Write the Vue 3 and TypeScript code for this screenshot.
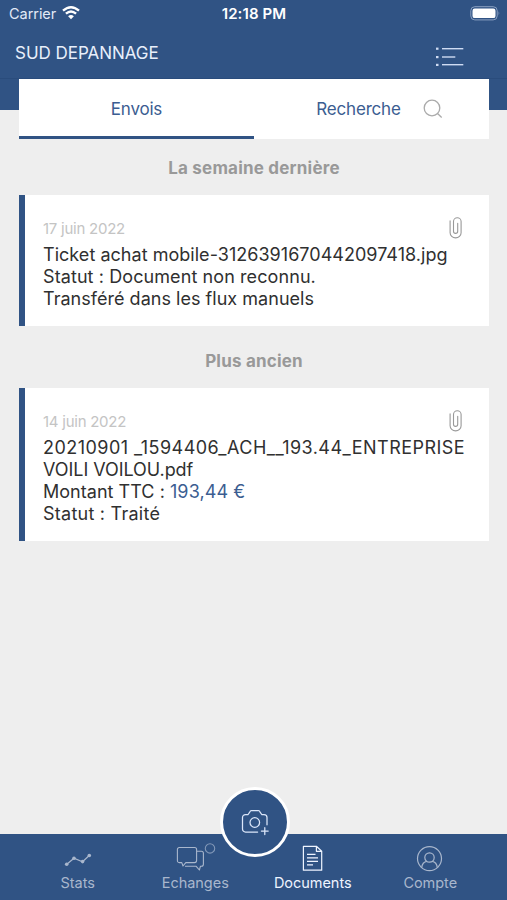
<script setup lang="ts">
interface Line {
  text: string
  amount?: string
  fit: string
}
interface Doc {
  group: string
  date: string
  lines: Line[]
}

const docs: Doc[] = [
  {
    group: 'La semaine dernière',
    date: '17 juin 2022',
    lines: [
      { text: 'Ticket achat mobile-3126391670442097418.jpg', fit: 'normal' },
      { text: 'Statut : Document non reconnu.', fit: 'loose' },
      { text: 'Transféré dans les flux manuels', fit: 'normal' },
    ],
  },
  {
    group: 'Plus ancien',
    date: '14 juin 2022',
    lines: [
      { text: '20210901 _1594406_ACH__193.44_ENTREPRISE', fit: 'wide' },
      { text: 'VOILI VOILOU.pdf', fit: 'tight' },
      { text: 'Montant TTC : ', amount: '193,44 €', fit: 'normal' },
      { text: 'Statut : Traité', fit: 'looser' },
    ],
  },
]

const tabs = ['Stats', 'Echanges', 'Documents', 'Compte']
</script>

<template>
  <div class="screen">
    <header class="header">
      <div class="status">
        <div class="carrier">
          <span>Carrier</span>
          <svg width="18" height="14" viewBox="0 0 18 14" fill="none" stroke="#fff">
            <path d="M1 4.7Q9-2.3 17 4.7M3.9 7.7Q9 3.2 14.1 7.7" stroke-width="2.3" />
            <path d="M6.1 10.2Q9 7.7 11.9 10.2L9 13.2Z" fill="#fff" stroke="none" />
          </svg>
        </div>
        <span class="clock">12:18 PM</span>
        <svg class="battery" width="31" height="15" viewBox="0 0 31 15">
          <rect x=".8" y=".7" width="26.4" height="13.2" rx="4" fill="none" stroke="#8aa0c1" stroke-width="1" />
          <rect x="2.5" y="2.5" width="23" height="9.6" rx="2.2" fill="#fff" />
          <path d="M28.6 5.2q1.8 2.1 0 4.3z" fill="#8aa0c1" />
        </svg>
      </div>
      <div class="title-row">
        <h1>SUD DEPANNAGE</h1>
        <svg width="29" height="20" viewBox="0 0 29 20" fill="#cfdcf3">
          <rect x="1" y=".6" width="2.5" height="2.2" /><rect x="1" y="9" width="2.5" height="2.2" /><rect x="1" y="16.8" width="2.5" height="2.2" />
          <rect x="7" y="1" width="21.3" height="1.4" /><rect x="7" y="9.3" width="13.3" height="1.4" /><rect x="7" y="17" width="21.3" height="1.4" />
        </svg>
      </div>
    </header>

    <nav class="switcher">
      <div class="switch active">Envois</div>
      <div class="switch search">
        <span>Recherche</span>
        <svg width="20" height="20" viewBox="0 0 20 20" fill="none" stroke="#aaa" stroke-width="1.3">
          <circle cx="9" cy="9" r="7.8" /><path d="M14.5 14.5l4.2 4" />
        </svg>
      </div>
    </nav>

    <main class="list">
      <section v-for="doc in docs" :key="doc.group">
        <h2>{{ doc.group }}</h2>
        <article class="card">
          <div class="meta">
            <time>{{ doc.date }}</time>
            <svg width="14" height="22" viewBox="0 0 14 22" fill="none" stroke="#999" stroke-width="1.1" stroke-linecap="round">
              <path d="M1.1 3.9V15.7a5.5 5.2 0 0 0 11 0V4.4a3.8 3.7 0 0 0-7.6 0V14.3a2.1 2.1 0 0 0 4.2 0V6.2" />
            </svg>
          </div>
          <p v-for="line in doc.lines" :key="line.text" :class="line.fit">{{ line.text }}<span v-if="line.amount" class="amount">{{ line.amount }}</span></p>
        </article>
      </section>
    </main>

    <footer class="tabbar">
      <div v-for="tab in tabs" :key="tab" class="tab" :class="{ current: tab === 'Documents' }">
        <div class="icon">
          <svg v-if="tab === 'Stats'" width="28" height="28" viewBox="0 0 28 28" fill="none" stroke="currentColor" stroke-width="1.2">
            <path d="M2.5 19.5L10 13.3L18.5 16.8L25.5 10.3" />
            <g fill="currentColor" stroke="none"><circle cx="2.7" cy="19.3" r="1.8" /><circle cx="10" cy="13.3" r="1.8" /><circle cx="18.6" cy="16.6" r="1.8" /><circle cx="25.3" cy="10.5" r="1.8" /></g>
          </svg>
          <svg v-else-if="tab === 'Echanges'" class="chat" width="40" height="28" viewBox="0 0 40 28" fill="none" stroke="currentColor" stroke-width="1.1" stroke-linejoin="round">
            <path d="M3.2 2.5H18.6a2 2 0 0 1 2 2V15.6a2 2 0 0 1-2 2H9.8L7 21L5.8 17.6H3.2a1.8 1.8 0 0 1-1.8-2V4.3a1.8 1.8 0 0 1 1.8-1.8Z" />
            <path d="M20.8 6.2H25.4a2 2 0 0 1 2 2V19.3a2 2 0 0 1-2 2H24.4L23.4 25L20.2 21.3H9" />
            <circle cx="34" cy="3.4" r="4.7" stroke="#8298b8" />
          </svg>
          <svg v-else-if="tab === 'Documents'" width="28" height="28" viewBox="0 0 28 28" fill="none" stroke="currentColor" stroke-width="1.2" stroke-linejoin="round">
            <path d="M4.4 1.3H17.4L22.7 6.3V25.2H4.4ZM17.4 1.3V6.3H22.7M8 9.4H16.5M8 12.9H19M8 16.4H19M8 19.9H14" />
          </svg>
          <svg v-else width="28" height="28" viewBox="0 0 28 28" fill="none" stroke="currentColor" stroke-width="1.2">
            <circle cx="13.5" cy="13.6" r="12" /><circle cx="13.5" cy="12.5" r="4.7" />
            <path d="M5.7 22.7C6.1 18.8 8.2 16.7 10.9 16.4M21.3 22.7C20.9 18.8 18.8 16.7 16.1 16.4" />
          </svg>
        </div>
        <span>{{ tab }}</span>
      </div>
      <button class="camera" aria-label="Ajouter">
        <svg width="30" height="30" viewBox="0 0 30 30" fill="none" stroke="#dce7fa" stroke-width="1.25" stroke-linejoin="round" stroke-linecap="round">
          <path d="M17.6 25H5.5a3 3 0 0 1-3-3V10.5a3 3 0 0 1 3-3H8.1l2.1-3.2a1.6 1.6 0 0 1 1.3-.8h6.8a1.6 1.6 0 0 1 1.3.8l2.1 3.2H24a3 3 0 0 1 3 3V17.8" />
          <circle cx="14.8" cy="15.5" r="4.8" /><path d="M24.8 20.7V27.5M21.4 24.1H28.2" />
        </svg>
      </button>
    </footer>
  </div>
</template>

<style>
body { background: #eee; }
</style>
<style scoped>
.screen { display: flex; flex-direction: column; height: 900px; background: #eee; font-family: Inter, "Liberation Sans", sans-serif; overflow: hidden; }
.header { box-sizing: border-box; height: 110px; flex: none; background: linear-gradient(#305384 0 78px, #2a4c7c 78px 79px, #305384 79px); color: #fff; }
.status { display: grid; grid-template-columns: 1fr auto 1fr; align-items: center; height: 27px; padding: 0 6px 0 9px; font-size: 14.5px; }
.carrier { display: flex; align-items: center; gap: 6px; color: #e2eaf7; letter-spacing: -.05px; }
.carrier svg { margin-top: -1px; }
.clock { font-size: 15px; font-weight: 600; letter-spacing: .1px; margin-right: 2px; }
.battery { justify-self: end; }
.title-row { display: flex; justify-content: space-between; align-items: center; height: 51px; padding: 0 43px 0 15px; }
h1 { margin: 0; font-size: 17px; font-weight: 400; letter-spacing: -.03px; color: #e8effb; }
.title-row svg { margin-top: 8px; }
.switcher { display: flex; flex: none; height: 60px; margin: -31px 18px 0 19px; background: #fff; color: #3b5d91; font-size: 17px; letter-spacing: -.2px; }
.switch { box-sizing: border-box; width: 235px; display: flex; align-items: center; justify-content: center; border-bottom: 3px solid transparent; padding-top: 3px; }
.active { border-color: #305384; }
.search { gap: 22px; padding-left: 16px; }
.list { flex: 1; padding: 0 18px 0 19px; }
h2 { margin: 0; height: 56px; line-height: 58px; text-align: center; font-size: 17px; font-weight: 700; letter-spacing: .2px; color: #999; }
section + section h2 { height: 62px; line-height: 70px; }
.card { box-sizing: border-box; background: #fff; border-left: 6px solid #305384; padding: 22px 17px 16px 18px; }
.meta { display: flex; justify-content: space-between; height: 27px; padding-right: 9px; }
time { font-size: 15px; line-height: 23px; letter-spacing: -.25px; color: #c4c4c4; }
p { margin: 0; font-size: 18px; line-height: 22px; color: #303030; white-space: pre; letter-spacing: .03px; }
.loose { letter-spacing: .09px; }
.looser { letter-spacing: .25px; }
.tight { letter-spacing: -.05px; }
.wide { letter-spacing: .46px; }
.amount { color: #3b5d91; letter-spacing: .1px; }
.tabbar { position: relative; box-sizing: border-box; flex: none; display: flex; height: 66px; padding: 0 18px 0 19px; background: #305384; }
.tab { flex: 1; display: flex; flex-direction: column; align-items: center; padding-top: 11px; color: #a9b7cd; font-size: 14.5px; line-height: 20px; letter-spacing: -.03px; }
.icon { display: flex; justify-content: center; width: 28px; height: 28px; }
.chat { flex: none; overflow: visible; margin-left: 1px; }
.current { color: #eef4ff; }
.camera { position: absolute; left: 220px; top: -47px; box-sizing: border-box; width: 70px; height: 70px; padding: 0; border: 3px solid #fff; border-radius: 50%; background: #305384; display: flex; align-items: center; justify-content: center; }
</style>
